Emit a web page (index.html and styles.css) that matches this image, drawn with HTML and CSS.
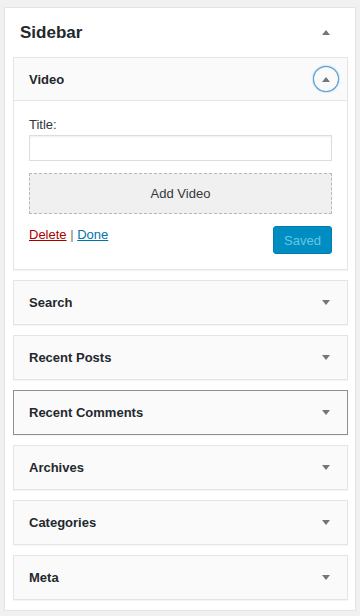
FILE: index.html
```html
<!DOCTYPE html>
<html lang="en">
<head>
  <meta charset="UTF-8" />
  <title>Sidebar Widgets</title>
  <meta name="viewport" content="width=device-width, initial-scale=1.0" />
  <link rel="stylesheet" href="styles.css">
</head>
<body>
  <div class="sidebar">
    <div class="sidebar-head">
      <h2>Sidebar</h2>
      <span class="toggle">
        <svg width="8" height="5" viewBox="0 0 8 5"><path d="M0 5 L4 0 L8 5 Z" /></svg>
      </span>
    </div>

    <div class="widget open">
      <div class="widget-top">
        <h3>Video</h3>
        <span class="toggle focus">
          <svg width="8" height="5" viewBox="0 0 8 5"><path d="M0 5 L4 0 L8 5 Z" /></svg>
        </span>
      </div>
      <div class="widget-inside">
        <label for="title">Title:</label>
        <input type="text" id="title">
        <div class="add-media">Add Video</div>
        <div class="widget-actions">
          <div class="links">
            <a href="#" class="delete">Delete</a>
            <span class="sep">|</span>
            <a href="#" class="done">Done</a>
          </div>
          <button class="btn-saved" disabled>Saved</button>
        </div>
      </div>
    </div>

    <div class="widget">
      <div class="widget-top">
        <h3>Search</h3>
        <span class="toggle"><svg width="8" height="5" viewBox="0 0 8 5"><path d="M0 0 L8 0 L4 5 Z" /></svg></span>
      </div>
    </div>

    <div class="widget">
      <div class="widget-top">
        <h3>Recent Posts</h3>
        <span class="toggle"><svg width="8" height="5" viewBox="0 0 8 5"><path d="M0 0 L8 0 L4 5 Z" /></svg></span>
      </div>
    </div>

    <div class="widget hover">
      <div class="widget-top">
        <h3>Recent Comments</h3>
        <span class="toggle"><svg width="8" height="5" viewBox="0 0 8 5"><path d="M0 0 L8 0 L4 5 Z" /></svg></span>
      </div>
    </div>

    <div class="widget">
      <div class="widget-top">
        <h3>Archives</h3>
        <span class="toggle"><svg width="8" height="5" viewBox="0 0 8 5"><path d="M0 0 L8 0 L4 5 Z" /></svg></span>
      </div>
    </div>

    <div class="widget">
      <div class="widget-top">
        <h3>Categories</h3>
        <span class="toggle"><svg width="8" height="5" viewBox="0 0 8 5"><path d="M0 0 L8 0 L4 5 Z" /></svg></span>
      </div>
    </div>

    <div class="widget">
      <div class="widget-top">
        <h3>Meta</h3>
        <span class="toggle"><svg width="8" height="5" viewBox="0 0 8 5"><path d="M0 0 L8 0 L4 5 Z" /></svg></span>
      </div>
    </div>
  </div>
</body>
</html>
```

FILE: styles.css
```css
* {
  box-sizing: border-box;
}

body {
  margin: 0;
  padding: 0;
  background-color: #f1f1f1;
  font-family: "Liberation Sans", Arial, sans-serif;
  font-size: 13px;
  color: #23282d;
}

.sidebar {
  width: 352px;
  margin: 7px 0 0 4px;
  padding: 0 7px 10px 8px;
  background: #fff;
  border: 1px solid #e2e4e7;
  box-shadow: 0 1px 1px rgba(0,0,0,0.04);
  display: flex;
  flex-direction: column;
  gap: 10px;
}

.sidebar-head {
  height: 49px;
  margin: 0 -7px -10px -8px;
  padding: 0 17px 0 15px;
  display: flex;
  justify-content: space-between;
  align-items: center;
}

.sidebar-head h2 {
  margin: 0;
  font-size: 17px;
  font-weight: bold;
  color: #23282d;
}

.toggle {
  width: 24px;
  height: 24px;
  border-radius: 50%;
  display: flex;
  align-items: center;
  justify-content: center;
}

.toggle svg {
  fill: #72777c;
}

.toggle.focus {
  box-shadow: 0 0 0 1px #5b9dd9, 0 0 2px 1px rgba(30,140,190,0.6);
}

.widget {
  border: 1px solid #e5e5e5;
  background: #fafafa;
  box-shadow: 0 1px 1px rgba(0,0,0,0.04);
}

.widget.hover {
  border-color: #8f8f8f;
}

.widget-top {
  height: 43px;
  padding: 0 9px 0 15px;
  display: flex;
  justify-content: space-between;
  align-items: center;
}

.widget-top h3 {
  margin: 0;
  font-size: 13px;
  font-weight: bold;
  color: #23282d;
}

.widget.open .widget-top {
  border-bottom: 1px solid #e5e5e5;
  height: 43px;
}

.widget-inside {
  background: #fff;
  padding: 14px 15px 15px 15px;
}

.widget-inside label {
  display: block;
  line-height: 20px;
  color: #32373c;
}

.widget-inside input {
  display: block;
  width: 100%;
  height: 26px;
  margin: 0;
  border: 1px solid #ddd;
  box-shadow: inset 0 1px 2px rgba(0,0,0,0.07);
  background: #fff;
}

.add-media {
  margin-top: 12px;
  height: 41px;
  border: 1px dashed #b4b9be;
  background: #f0f0f1;
  color: #32373c;
  display: flex;
  align-items: center;
  justify-content: center;
}

.widget-actions {
  margin-top: 12px;
  display: flex;
  justify-content: space-between;
  align-items: flex-start;
}

.links {
  line-height: 16px;
  padding-top: 1px;
}

.links a {
  text-decoration: underline;
}

.delete {
  color: #a00;
}

.done {
  color: #0073aa;
}

.sep {
  color: #72777c;
}

.btn-saved {
  width: 59px;
  height: 28px;
  border: 1px solid #007cb2;
  border-radius: 3px;
  background: #008ec2;
  color: #66c6e4;
  font-family: "Liberation Sans", Arial, sans-serif;
  font-size: 13px;
  padding: 0;
}
```
